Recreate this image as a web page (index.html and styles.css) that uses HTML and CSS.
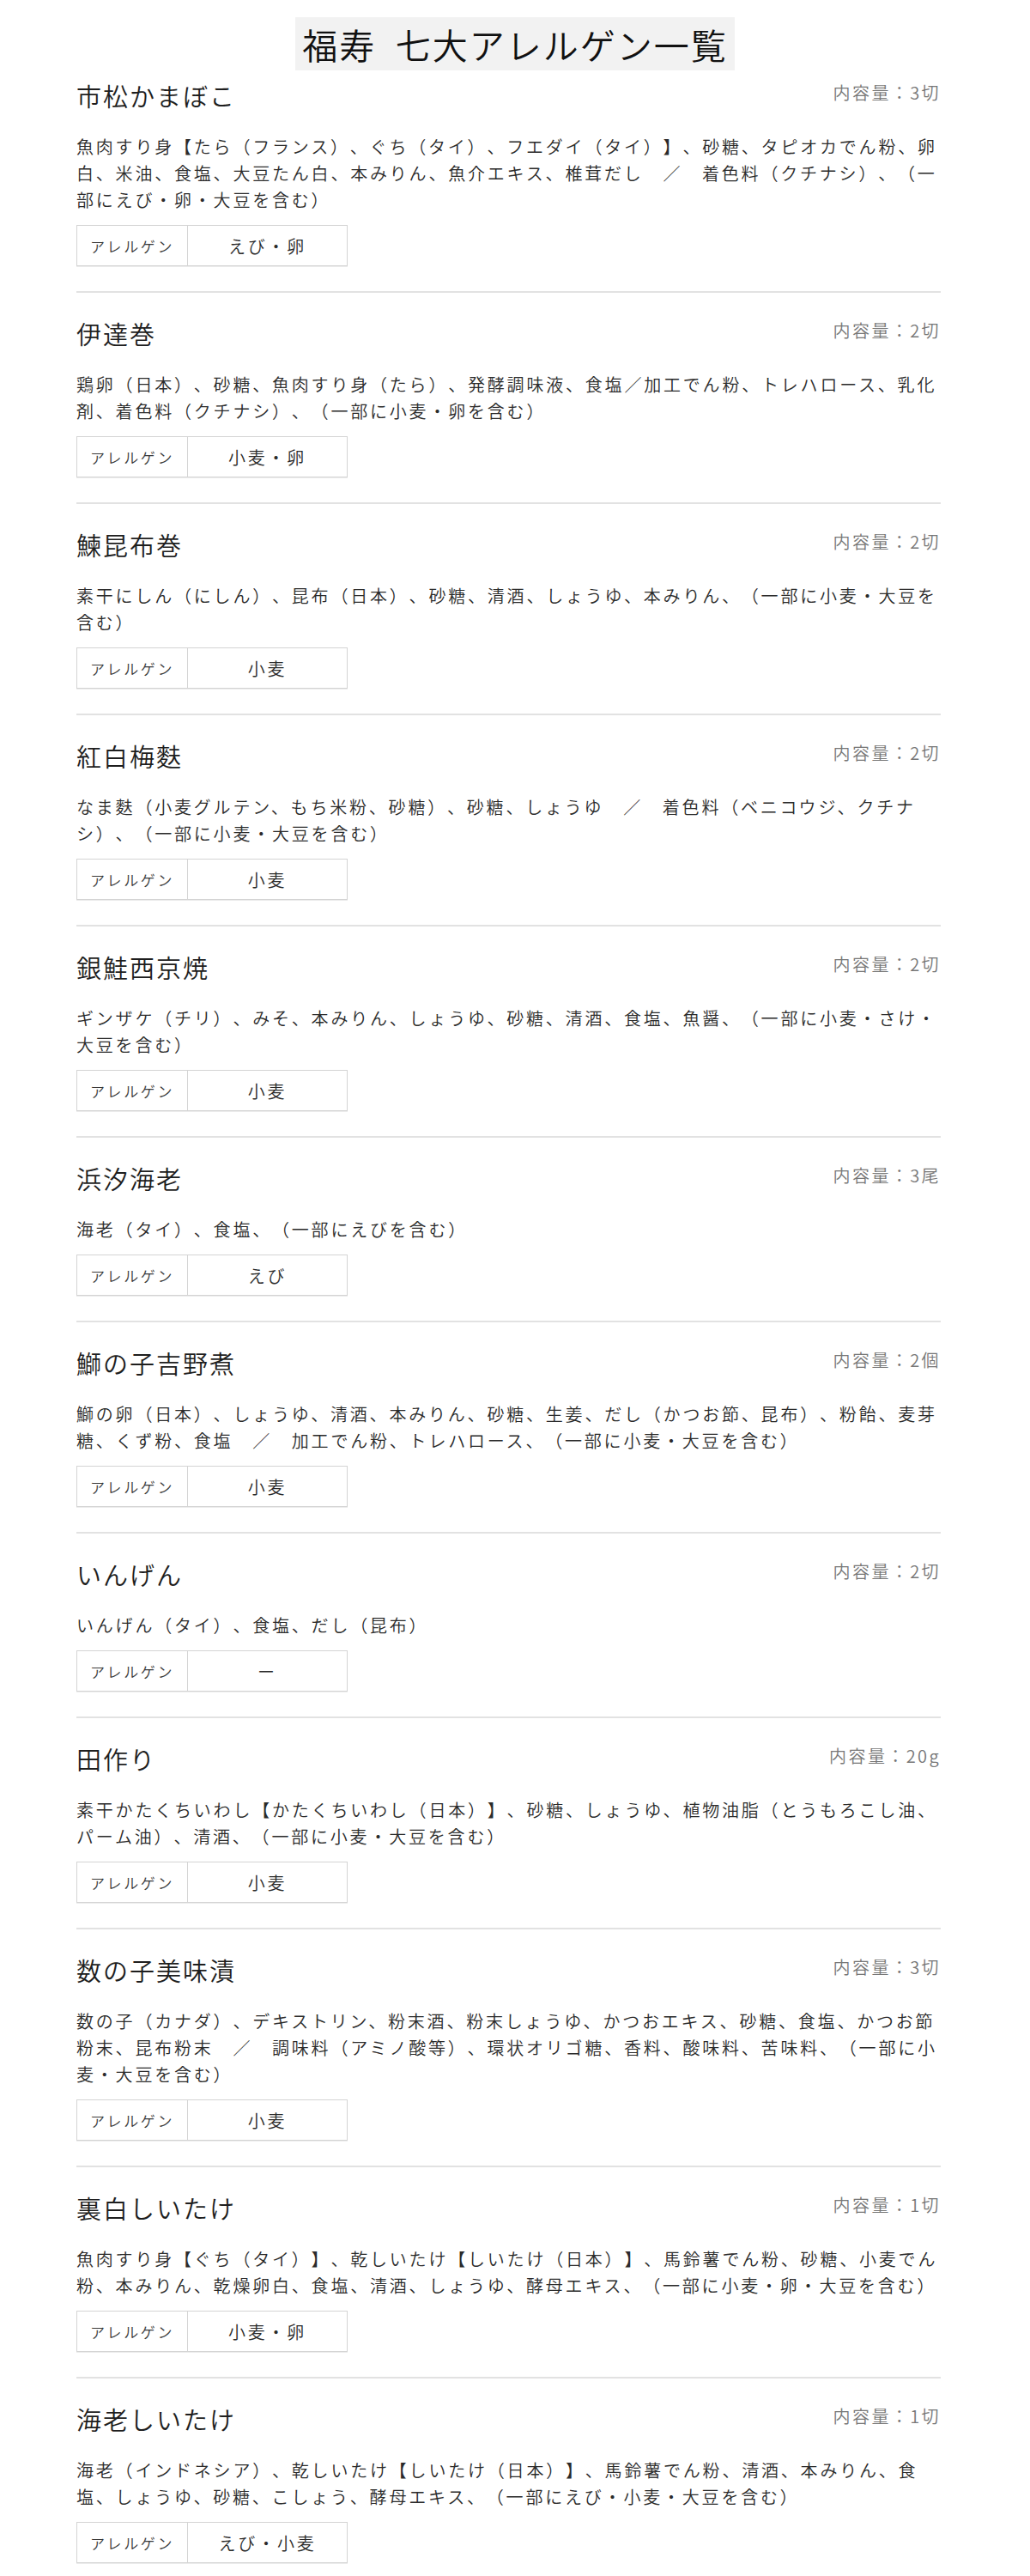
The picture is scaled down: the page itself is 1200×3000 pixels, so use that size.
FILE: index.html
```html
<!DOCTYPE html>
<html lang="ja">
<head>
    <meta charset="UTF-8">
    <meta name="viewport" content="width=device-width, initial-scale=1.0">
    <title>福寿 七大アレルゲン一覧</title>
    <link rel="stylesheet" href="styles.css">
</head>
<body>
    <div class="page-head">
        <h1 class="page-title">福寿&ensp;七大アレルゲン一覧</h1>
    </div>

    <div class="container">
        <div class="item">
            <div class="item-head">
                <h2 class="item-name">市松かまぼこ</h2>
                <span class="item-volume">内容量：3切</span>
            </div>
            <p class="item-ingredients">魚肉すり身【たら（フランス）、ぐち（タイ）、フエダイ（タイ）】、砂糖、タピオカでん粉、卵白、米油、食塩、大豆たん白、本みりん、魚介エキス、椎茸だし　／　着色料（クチナシ）、（一部にえび・卵・大豆を含む）</p>
            <div class="allergen">
                <span class="allergen-label">アレルゲン</span>
                <span class="allergen-value">えび・卵</span>
            </div>
        </div>

        <div class="item">
            <div class="item-head">
                <h2 class="item-name">伊達巻</h2>
                <span class="item-volume">内容量：2切</span>
            </div>
            <p class="item-ingredients">鶏卵（日本）、砂糖、魚肉すり身（たら）、発酵調味液、食塩／加工でん粉、トレハロース、乳化剤、着色料（クチナシ）、（一部に小麦・卵を含む）</p>
            <div class="allergen">
                <span class="allergen-label">アレルゲン</span>
                <span class="allergen-value">小麦・卵</span>
            </div>
        </div>

        <div class="item">
            <div class="item-head">
                <h2 class="item-name">鰊昆布巻</h2>
                <span class="item-volume">内容量：2切</span>
            </div>
            <p class="item-ingredients">素干にしん（にしん）、昆布（日本）、砂糖、清酒、しょうゆ、本みりん、（一部に小麦・大豆を含む）</p>
            <div class="allergen">
                <span class="allergen-label">アレルゲン</span>
                <span class="allergen-value">小麦</span>
            </div>
        </div>

        <div class="item">
            <div class="item-head">
                <h2 class="item-name">紅白梅麩</h2>
                <span class="item-volume">内容量：2切</span>
            </div>
            <p class="item-ingredients">なま麩（小麦グルテン、もち米粉、砂糖）、砂糖、しょうゆ　／　着色料（ベニコウジ、クチナシ）、（一部に小麦・大豆を含む）</p>
            <div class="allergen">
                <span class="allergen-label">アレルゲン</span>
                <span class="allergen-value">小麦</span>
            </div>
        </div>

        <div class="item">
            <div class="item-head">
                <h2 class="item-name">銀鮭西京焼</h2>
                <span class="item-volume">内容量：2切</span>
            </div>
            <p class="item-ingredients">ギンザケ（チリ）、みそ、本みりん、しょうゆ、砂糖、清酒、食塩、魚醤、（一部に小麦・さけ・大豆を含む）</p>
            <div class="allergen">
                <span class="allergen-label">アレルゲン</span>
                <span class="allergen-value">小麦</span>
            </div>
        </div>

        <div class="item">
            <div class="item-head">
                <h2 class="item-name">浜汐海老</h2>
                <span class="item-volume">内容量：3尾</span>
            </div>
            <p class="item-ingredients">海老（タイ）、食塩、（一部にえびを含む）</p>
            <div class="allergen">
                <span class="allergen-label">アレルゲン</span>
                <span class="allergen-value">えび</span>
            </div>
        </div>

        <div class="item">
            <div class="item-head">
                <h2 class="item-name">鰤の子吉野煮</h2>
                <span class="item-volume">内容量：2個</span>
            </div>
            <p class="item-ingredients">鰤の卵（日本）、しょうゆ、清酒、本みりん、砂糖、生姜、だし（かつお節、昆布）、粉飴、麦芽糖、くず粉、食塩　／　加工でん粉、トレハロース、（一部に小麦・大豆を含む）</p>
            <div class="allergen">
                <span class="allergen-label">アレルゲン</span>
                <span class="allergen-value">小麦</span>
            </div>
        </div>

        <div class="item">
            <div class="item-head">
                <h2 class="item-name">いんげん</h2>
                <span class="item-volume">内容量：2切</span>
            </div>
            <p class="item-ingredients">いんげん（タイ）、食塩、だし（昆布）</p>
            <div class="allergen">
                <span class="allergen-label">アレルゲン</span>
                <span class="allergen-value">ー</span>
            </div>
        </div>

        <div class="item">
            <div class="item-head">
                <h2 class="item-name">田作り</h2>
                <span class="item-volume">内容量：20g</span>
            </div>
            <p class="item-ingredients">素干かたくちいわし【かたくちいわし（日本）】、砂糖、しょうゆ、植物油脂（とうもろこし油、パーム油）、清酒、（一部に小麦・大豆を含む）</p>
            <div class="allergen">
                <span class="allergen-label">アレルゲン</span>
                <span class="allergen-value">小麦</span>
            </div>
        </div>

        <div class="item">
            <div class="item-head">
                <h2 class="item-name">数の子美味漬</h2>
                <span class="item-volume">内容量：3切</span>
            </div>
            <p class="item-ingredients">数の子（カナダ）、デキストリン、粉末酒、粉末しょうゆ、かつおエキス、砂糖、食塩、かつお節粉末、昆布粉末　／　調味料（アミノ酸等）、環状オリゴ糖、香料、酸味料、苦味料、（一部に小麦・大豆を含む）</p>
            <div class="allergen">
                <span class="allergen-label">アレルゲン</span>
                <span class="allergen-value">小麦</span>
            </div>
        </div>

        <div class="item">
            <div class="item-head">
                <h2 class="item-name">裏白しいたけ</h2>
                <span class="item-volume">内容量：1切</span>
            </div>
            <p class="item-ingredients">魚肉すり身【ぐち（タイ）】、乾しいたけ【しいたけ（日本）】、馬鈴薯でん粉、砂糖、小麦でん粉、本みりん、乾燥卵白、食塩、清酒、しょうゆ、酵母エキス、（一部に小麦・卵・大豆を含む）</p>
            <div class="allergen">
                <span class="allergen-label">アレルゲン</span>
                <span class="allergen-value">小麦・卵</span>
            </div>
        </div>

        <div class="item">
            <div class="item-head">
                <h2 class="item-name">海老しいたけ</h2>
                <span class="item-volume">内容量：1切</span>
            </div>
            <p class="item-ingredients">海老（インドネシア）、乾しいたけ【しいたけ（日本）】、馬鈴薯でん粉、清酒、本みりん、食塩、しょうゆ、砂糖、こしょう、酵母エキス、（一部にえび・小麦・大豆を含む）</p>
            <div class="allergen">
                <span class="allergen-label">アレルゲン</span>
                <span class="allergen-value">えび・小麦</span>
            </div>
        </div>
    </div>
</body>
</html>
```

FILE: styles.css
```css
body {
    font-family: "Noto Sans CJK JP", "Noto Sans", sans-serif;
    font-weight: 350;
    color: #2b2b2b;
    margin: 0;
    background-color: #fff;
    text-spacing-trim: space-all;
}
.page-head {
    text-align: center;
    padding-top: 20px;
}
.page-title {
    display: inline-block;
    margin: 0;
    padding: 0 8px;
    font-size: 41px;
    font-weight: 350;
    line-height: 62px;
    letter-spacing: 2px;
    color: #111;
    background-color: #f2f2f2;
}
.container {
    width: 1007px;
    margin-left: 89px;
}
.item {
    padding: 26px 0 29px;
    border-bottom: 2px solid #e2e2e2;
}
.item:first-child {
    padding-top: 8px;
}
.item:last-child {
    border-bottom: none;
}
.item-head {
    display: flex;
    justify-content: space-between;
    align-items: flex-start;
}
.item-name {
    margin: 0;
    font-size: 29px;
    font-weight: 350;
    line-height: 42px;
    letter-spacing: 2px;
    color: #1e1e1e;
}
.item-volume {
    font-size: 20px;
    line-height: 36px;
    letter-spacing: 2.4px;
    color: #777;
}
.item-ingredients {
    margin: 23px 0 14px;
    font-size: 20px;
    line-height: 31px;
    letter-spacing: 2.8px;
}
.allergen {
    display: inline-flex;
    height: 48px;
    box-sizing: border-box;
    border: 1px solid #d4d4d4;
    box-shadow: 0 1px 0 #ebebeb;
}
.allergen-label {
    width: 128px;
    border-right: 1px solid #d4d4d4;
    display: flex;
    align-items: center;
    justify-content: center;
    font-size: 17px;
    letter-spacing: 2.6px;
    color: #3a3a3a;
}
.allergen-value {
    width: 185px;
    display: flex;
    align-items: center;
    justify-content: center;
    font-size: 20px;
    letter-spacing: 2.8px;
    color: #2b2b2b;
}
```
